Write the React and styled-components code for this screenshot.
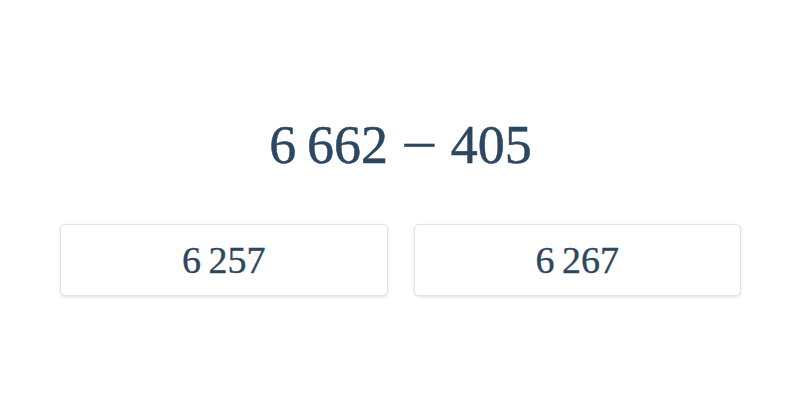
import React from "react";
import styled, { createGlobalStyle } from "styled-components";

const GlobalStyle = createGlobalStyle`
  html, body {
    margin: 0;
    padding: 0;
    background: #ffffff;
  }
  body {
    font-family: "Liberation Serif", "DejaVu Serif", serif;
  }
`;

const Page = styled.main`
  width: 800px;
  height: 400px;
  box-sizing: border-box;
  padding: 108px 59px 0 60px;
  display: flex;
  flex-direction: column;
  align-items: stretch;
`;

const Problem = styled.div`
  height: 74px;
  display: flex;
  align-items: center;
  justify-content: center;
  font-family: "Liberation Serif", serif;
  font-size: 54px;
  color: #2d4761;
  -webkit-text-stroke: 0.5px #2d4761;
`;

const Op = styled.span`
  display: inline-block;
  margin: 0 0.3em;
  transform: scaleX(1.18);
`;

const Choices = styled.div`
  margin-top: 42px;
  display: grid;
  grid-template-columns: 1fr 1fr;
  gap: 26px;
`;

const Choice = styled.button`
  height: 72px;
  box-sizing: border-box;
  background: #ffffff;
  border: 1px solid #e3e3e3;
  border-radius: 5px;
  box-shadow: 0 1px 3px rgba(0, 0, 0, 0.12);
  font-family: "Liberation Serif", serif;
  font-size: 38px;
  color: #2d4761;
  -webkit-text-stroke: 0.35px #2d4761;
  cursor: pointer;
  display: flex;
  align-items: center;
  justify-content: center;
  padding: 0;
`;

const problem = { a: "6\u2009662", op: "\u2212", b: "405" };
const options = ["6\u2009257", "6\u2009267"];

export default function App() {
  return (
    <>
      <GlobalStyle />
      <Page>
        <Problem>
          {problem.a}
          <Op>{problem.op}</Op>
          {problem.b}
        </Problem>
        <Choices>
          {options.map((o) => (
            <Choice key={o}>{o}</Choice>
          ))}
        </Choices>
      </Page>
    </>
  );
}
